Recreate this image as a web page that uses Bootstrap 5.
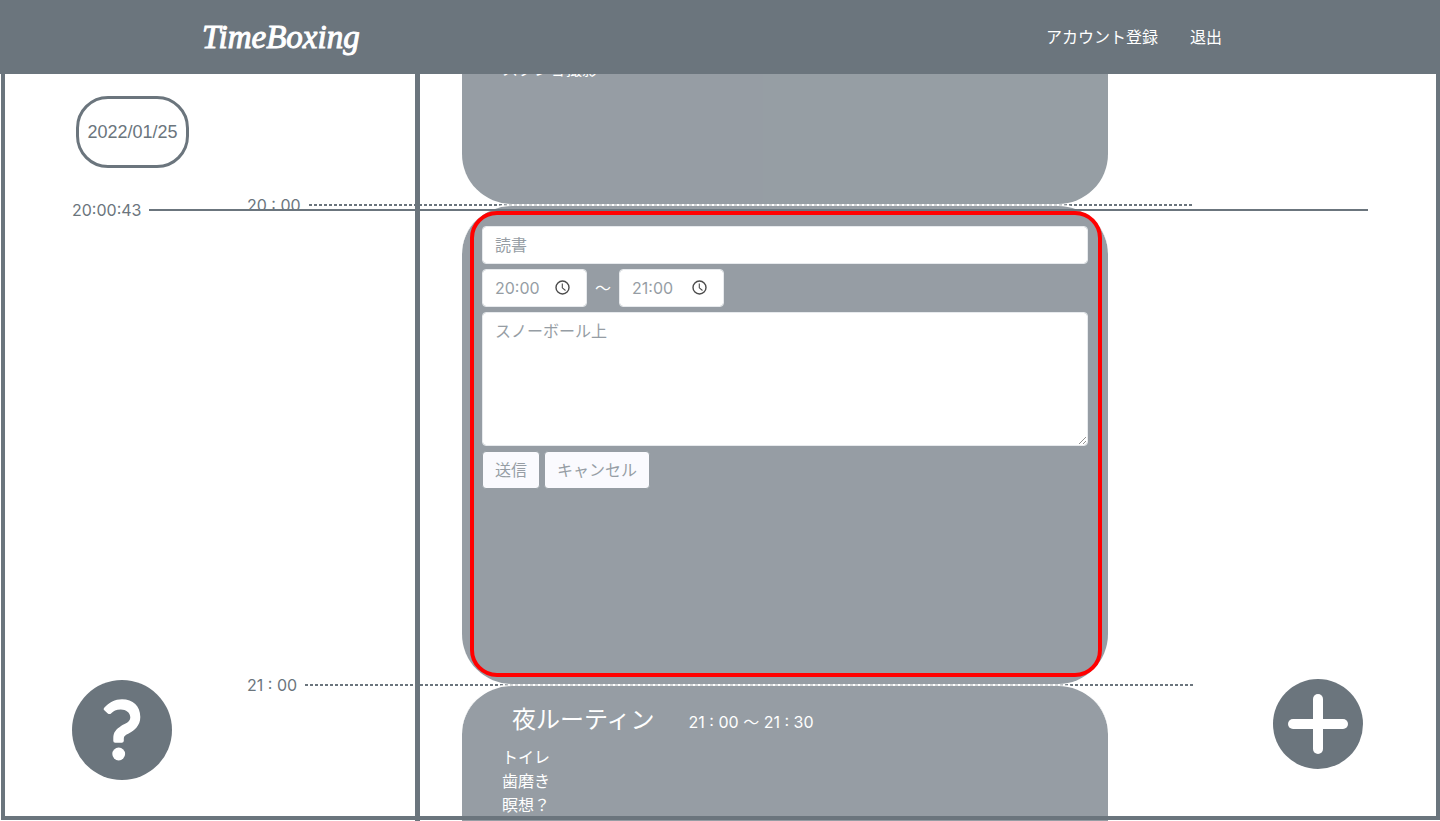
<!DOCTYPE html>
<html lang="ja">
<head>
<meta charset="utf-8">
<meta name="viewport" content="width=device-width, initial-scale=1">
<title>TimeBoxing</title>
<link href="https://cdn.jsdelivr.net/npm/bootstrap@5.3.0/dist/css/bootstrap.min.css" rel="stylesheet">
<style>
:root { --slate: #6b757d; --bar-height: 74px; }
body { font-family: Inter, "Noto Sans CJK JP", sans-serif; font-size: 16px; line-height: 24px; color: var(--slate); }
.topbar { background: var(--slate); height: var(--bar-height); }
.topbar-inner { max-width: 1060px; padding: 0 12px; }
.logo { font: italic 33px/48px "Liberation Serif", serif; -webkit-text-stroke: 1px #fff; }
.topbar .nav-link { padding: 8px 16px; }

.board { height: calc(100vh - var(--bar-height)); }
.board::after { content: ""; position: absolute; inset: 0 0 1px 1px; border: 4px solid var(--slate); border-top: 0; pointer-events: none; }
.rail { width: 420px; border-right: 5px solid var(--slate); padding: 22px 0 41px 72px; }
.date-pill { width: 113px; height: 72px; margin-left: 4px; border: 3px solid var(--slate); border-radius: 32px; font-family: "Liberation Sans", sans-serif; font-size: 18px; }
.round-btn { padding: 0; border: 0; background: none; line-height: 0; }
.add-btn { right: 77px; bottom: 52px; }

.slot { height: 480px; }
.slot-partial { height: 130px; }
.hour-mark { top: -11px; left: -173px; right: 247px; gap: 8px; }
.dashes { height: 2px; background: repeating-linear-gradient(90deg, var(--slate) 0 3px, transparent 3px 5px); }
.box { margin: 0 332px 0 42px; height: 480px; border-top: 2px solid #fff; border-radius: 50px; background: #6a757e; opacity: .7; color: #fff; padding: 0 20px; }
.box-tail { height: 147px; border-top: 0; border-radius: 0 0 50px 50px; }
.box-head { padding: 16px 30px 7px; gap: 34px; }
.box-head h2 { font-size: 24px; line-height: 36px; font-weight: 400; }
.box-text { padding: 0 20px; }
.box .form-control { color: #6a757e; border-radius: 4px; padding: 6px 12px; line-height: 24px; }
.edit-form { padding-top: 20px; gap: 5px; }
.time-field { width: 105px; }
.time-field svg { right: 17px; top: 11px; }
.time-gap { width: 32px; }
.box .btn { background: #f8f9fe; color: #6a757e; border-color: #6a757e; border-radius: 4px; }
.focus-frame { top: 7px; bottom: 7px; left: 50px; right: 338px; border: 4px solid #f00; border-radius: 27px; pointer-events: none; z-index: 2; }
.now { left: 72px; right: 72px; top: 124px; gap: 8px; pointer-events: none; z-index: 1; }
.now-rule { height: 2px; background: var(--slate); }
</style>
</head>
<body class="overflow-hidden">
<header class="topbar">
  <nav class="topbar-inner mx-auto h-100 d-flex align-items-center justify-content-between">
    <a class="logo text-white text-decoration-none" href="#">TimeBoxing</a>
    <div class="d-flex">
      <a class="nav-link text-white" href="#">アカウント登録</a>
      <a class="nav-link text-white" href="#">退出</a>
    </div>
  </nav>
</header>

<main class="board position-relative overflow-hidden d-flex">
  <aside class="rail flex-shrink-0 d-flex flex-column justify-content-between align-items-start">
    <div class="date-pill d-flex align-items-center justify-content-center">2022/01/25</div>
    <button class="round-btn" type="button" aria-label="ヘルプ">
      <svg width="100" height="100" viewBox="0 0 100 100"><circle cx="50" cy="50" r="50" fill="#6b757d"/><path fill="#fff" d="M32 28C37 22.3 43 19.3 50 19.3C61 19.3 68.3 26 68.3 37C68.3 46 62 50.5 57.5 53C54 55 51.9 55.5 51.8 59V61Q51.6 62.7 49.8 62.7H43.2Q41.3 62.7 41.3 61V58C41.3 52 44.5 49 49 46C53 43.5 58 42.5 58.3 37.5C58.3 32.5 54 29.5 48.8 29.5C44 29.5 41.5 31 39.3 33.2C38 34.4 37 34.4 35.5 33.2L32.3 30.3Q31 29.2 32 28Z"/><circle cx="46.7" cy="74" r="6.4" fill="#fff"/></svg>
    </button>
  </aside>

  <div class="flex-grow-1">
    <section class="slot-partial overflow-hidden d-flex flex-column justify-content-end">
      <div class="box box-tail flex-shrink-0"><div class="box-text">スクショ撮影</div></div>
    </section>

    <section class="slot position-relative">
      <div class="hour-mark position-absolute d-flex align-items-center"><span>20 : 00</span><span class="dashes flex-grow-1"></span></div>
      <div class="box">
        <form class="edit-form d-flex flex-column">
          <input class="form-control" type="text" value="読書" aria-label="タイトル">
          <div class="d-flex align-items-center">
            <div class="time-field position-relative">
              <input class="form-control" type="text" value="20:00" aria-label="開始時刻">
              <svg class="position-absolute" width="15" height="15" viewBox="0 0 15 15" fill="none" stroke="#000" stroke-width="1.4"><circle cx="7.5" cy="7.5" r="6.5"/><path stroke-width="1.1" d="M7.3 3.5V7.8L10.5 10.5"/></svg>
            </div>
            <span class="time-gap text-center">～</span>
            <div class="time-field position-relative">
              <input class="form-control" type="text" value="21:00" aria-label="終了時刻">
              <svg class="position-absolute" width="15" height="15" viewBox="0 0 15 15" fill="none" stroke="#000" stroke-width="1.4"><circle cx="7.5" cy="7.5" r="6.5"/><path stroke-width="1.1" d="M7.3 3.5V7.8L10.5 10.5"/></svg>
            </div>
          </div>
          <textarea class="form-control" rows="5" aria-label="内容">スノーボール上</textarea>
          <div class="d-flex gap-1">
            <button class="btn" type="submit">送信</button>
            <button class="btn" type="button">キャンセル</button>
          </div>
        </form>
      </div>
      <div class="focus-frame position-absolute"></div>
    </section>

    <section class="slot position-relative">
      <div class="hour-mark position-absolute d-flex align-items-center"><span>21 : 00</span><span class="dashes flex-grow-1"></span></div>
      <div class="box">
        <div class="box-head d-flex align-items-baseline"><h2 class="m-0">夜ルーティン</h2><span>21 : 00 ～ 21 : 30</span></div>
        <div class="box-text">トイレ<br>歯磨き<br>瞑想？</div>
      </div>
    </section>
  </div>

  <div class="now position-absolute d-flex align-items-center"><span>20:00:43</span><span class="now-rule flex-grow-1"></span></div>
  <button class="round-btn add-btn position-absolute" type="button" aria-label="追加">
    <svg width="90" height="90" viewBox="0 0 90 90"><circle cx="45" cy="45" r="45" fill="#6b757d"/><g fill="#fff"><rect x="40" y="15" width="10" height="60" rx="5"/><rect x="15" y="40" width="60" height="10" rx="5"/></g></svg>
  </button>
</main>
<script src="https://cdn.jsdelivr.net/npm/bootstrap@5.3.0/dist/js/bootstrap.bundle.min.js"></script>
</body>
</html>
